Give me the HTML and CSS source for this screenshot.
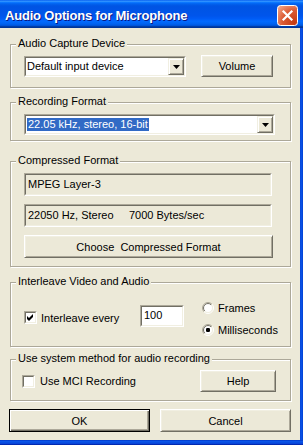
FILE: index.html
```html
<!DOCTYPE html>
<html>
<head>
<meta charset="utf-8">
<link rel="stylesheet" href="styles.css">
</head>
<body>
<div class="window">
  <div class="titlebar">
    <span class="title">Audio Options for Microphone</span>
    <span class="close">
      <svg width="21" height="21" viewBox="0 0 21 21">
        <defs>
          <radialGradient id="cg" cx="0.85" cy="0.85" r="1.1">
            <stop offset="0" stop-color="#C43A12"/>
            <stop offset="0.55" stop-color="#DB5A33"/>
            <stop offset="1" stop-color="#F2A486"/>
          </radialGradient>
        </defs>
        <rect x="0.5" y="0.5" width="20" height="20" rx="3" fill="url(#cg)" stroke="#fff"/>
        <path d="M6.5 6.5 L14.5 14.5 M14.5 6.5 L6.5 14.5" stroke="#fff" stroke-width="2.2" stroke-linecap="square"/>
      </svg>
    </span>
  </div>
  <div class="frame">
    <div class="client">

      <div class="group g1">
        <div class="legend">Audio Capture Device</div>
        <div class="row r1">
          <div class="sunk combo c1">
            <div class="sunk-in white">
              <span class="ctext">Default input device</span>
              <span class="arrow"><svg width="7" height="4" viewBox="0 0 7 4"><path d="M0 0h7l-3.5 4z" fill="#000"/></svg></span>
            </div>
          </div>
          <button class="btn vol">Volume</button>
        </div>
      </div>

      <div class="group g2">
        <div class="legend">Recording Format</div>
        <div class="sunk combo c2">
          <div class="sunk-in white">
            <span class="ctext"><span class="sel">22.05 kHz, stereo, 16-bit</span></span>
            <span class="arrow"><svg width="7" height="4" viewBox="0 0 7 4"><path d="M0 0h7l-3.5 4z" fill="#000"/></svg></span>
          </div>
        </div>
      </div>

      <div class="group g3">
        <div class="legend">Compressed Format</div>
        <div class="sunk field f1"><div class="sunk-in"><span class="ftext">MPEG Layer-3</span></div></div>
        <div class="sunk field f2"><div class="sunk-in"><span class="ftext"><span class="hz">22050 Hz, Stereo</span><span>7000 Bytes/sec</span></span></div></div>
        <button class="btn choose">Choose  Compressed Format</button>
      </div>

      <div class="group g4">
        <div class="legend">Interleave Video and Audio</div>
        <div class="row r4">
          <label class="chk-label">
            <span class="sunk chk"><span class="sunk-in white">
              <svg width="9" height="9" viewBox="0 0 9 9"><path d="M1 3 L3 5 L7 1 L7 4 L3 8 L1 6 Z" fill="#000"/></svg>
            </span></span>
            <span class="lbl">Interleave every</span>
          </label>
          <div class="sunk edit"><div class="sunk-in white"><span class="etext">100</span></div></div>
          <div class="radios">
            <div class="radio-row">
              <svg class="radio" width="12" height="12" viewBox="0 0 12 12">
                <defs>
                  <linearGradient id="ro" x1="0" y1="0" x2="1" y2="1"><stop offset="0.5" stop-color="#ACA899"/><stop offset="0.5" stop-color="#fff"/></linearGradient>
                  <linearGradient id="ri" x1="0" y1="0" x2="1" y2="1"><stop offset="0.5" stop-color="#716F64"/><stop offset="0.5" stop-color="#F1EFE2"/></linearGradient>
                </defs>
                <circle cx="6" cy="6" r="5.5" fill="none" stroke="url(#ro)"/>
                <circle cx="6" cy="6" r="4.5" fill="#fff" stroke="url(#ri)"/>
              </svg>
              <span class="rlbl">Frames</span>
            </div>
            <div class="radio-row">
              <svg class="radio" width="12" height="12" viewBox="0 0 12 12">
                <circle cx="6" cy="6" r="5.5" fill="none" stroke="url(#ro)"/>
                <circle cx="6" cy="6" r="4.5" fill="#fff" stroke="url(#ri)"/>
                <rect x="4" y="4" width="4" height="4" rx="1.2" fill="#000"/>
              </svg>
              <span class="rlbl">Milliseconds</span>
            </div>
          </div>
        </div>
      </div>

      <div class="group g5">
        <div class="legend">Use system method for audio recording</div>
        <div class="row r5">
          <label class="chk-label mci">
            <span class="sunk chk"><span class="sunk-in white"></span></span>
            <span class="lbl">Use MCI Recording</span>
          </label>
          <button class="btn help">Help</button>
        </div>
      </div>

      <div class="buttons">
        <button class="btn default ok">OK</button>
        <button class="btn cancel">Cancel</button>
      </div>

    </div>
    <div class="rborder"></div>
  </div>
  <div class="bborder"></div>
</div>
</body>
</html>
```
FILE: styles.css
```css
* { box-sizing: border-box; }
html, body { margin: 0; padding: 0; }
body {
  width: 303px;
  height: 445px;
  overflow: hidden;
  font-family: "Liberation Sans", Arial, sans-serif;
  font-size: 11px;
  color: #000;
  background: #ECE9D8;
}
.window {
  width: 303px;
  height: 445px;
  display: flex;
  flex-direction: column;
  background: #ECE9D8;
}
.titlebar {
  height: 28px;
  flex: none;
  display: flex;
  align-items: center;
  justify-content: space-between;
  padding: 2px 5px 0 5px;
  background: linear-gradient(to bottom, #0058EE 0%, #3593FF 4%, #288EFF 6%, #127DFF 8%, #036FFC 10%, #0262EE 14%, #0057E5 20%, #0054E3 24%, #0055EB 56%, #005BF5 66%, #026AFE 76%, #0062EF 86%, #0052D6 92%, #0040AB 94%, #003092 100%);
}
.title {
  color: #fff;
  font-weight: bold;
  font-size: 13px;
  text-shadow: 1px 1px 0 #0A1883;
  letter-spacing: -0.2px;
}
.close { width: 21px; height: 21px; display: block; }
.close svg { display: block; }
.frame { flex: 1; display: flex; min-height: 0; }
.client {
  flex: 1;
  display: flex;
  flex-direction: column;
  padding: 0 9px 0 10px;
}
.rborder {
  width: 4px;
  flex: none;
  background: linear-gradient(to right, #0845D9 0%, #0A55E8 50%, #0036C8 75%, #001C9C 100%);
}
.bborder {
  height: 5px;
  flex: none;
  background: linear-gradient(to bottom, #0036C8 0%, #0A55E8 30%, #0845D9 70%, #001C9C 100%);
}

/* buttons (base) */
.btn {
  font-family: "Liberation Sans", Arial, sans-serif;
  font-size: 11px;
  color: #000;
  background: #ECE9D8;
  border: 1px solid;
  border-color: #fff #716F64 #716F64 #fff;
  box-shadow: inset 1px 1px 0 #F1EFE2, inset -1px -1px 0 #ACA899;
  padding: 0;
  margin: 0;
  text-align: center;
  flex: none;
}
.btn.default {
  border: 1px solid #000;
  box-shadow: inset 1px 1px 0 #fff, inset -1px -1px 0 #716F64, inset -2px -2px 0 #ACA899;
}

/* group boxes */
.group {
  display: flex;
  flex-direction: column;
  border: 1px solid #ACA899;
  box-shadow: inset 1px 1px 0 #fff, 1px 1px 0 #fff;
}
.legend {
  align-self: flex-start;
  height: 13px;
  line-height: 13px;
  margin: -8px 0 0 5px;
  padding: 0 2px;
  background: #ECE9D8;
  white-space: nowrap;
}
.g1 { margin-top: 16px; padding-bottom: 10px; }
.g2 { margin-top: 14px; padding-bottom: 5px; }
.g3 { margin-top: 20px; padding-bottom: 8px; }
.g4 { margin-top: 15px; padding-bottom: 10px; }
.g5 { margin-top: 12px; padding-bottom: 8px; }

.row { display: flex; align-items: center; }

/* sunken controls */
.sunk {
  border: 1px solid;
  border-color: #ACA899 #fff #fff #ACA899;
}
.sunk-in {
  height: 100%;
  border: 1px solid;
  border-color: #716F64 #F1EFE2 #F1EFE2 #716F64;
  display: flex;
  align-items: center;
}
.white { background: #fff; }

.combo { height: 21px; flex: none; }
.ctext { flex: 1; white-space: nowrap; overflow: hidden; padding-left: 1px; line-height: 13px; }
.arrow {
  width: 16px;
  height: 17px;
  flex: none;
  display: flex;
  align-items: center;
  justify-content: center;
  background: #ECE9D8;
  border: 1px solid;
  border-color: #F1EFE2 #716F64 #716F64 #F1EFE2;
  box-shadow: inset 1px 1px 0 #fff, inset -1px -1px 0 #ACA899;
}
.arrow svg { display: block; margin-top: 1px; }
.sel { background: #316AC5; color: #fff; padding: 0 1px 0 1px; display: inline-block; }

.r1 { margin-top: 5px; height: 22px; padding-left: 13px; }
.c1 { width: 162px; }
.vol { margin-left: 15px; width: 72px; height: 22px; }

.c2 { margin: 6px 0 0 13px; width: 251px; }

.field { height: 23px; width: 248px; margin-left: 13px; }
.f1 { margin-top: 6px; }
.f2 { margin-top: 8px; }
.field .sunk-in { background: #ECE9D8; }
.ftext { padding-left: 2px; white-space: nowrap; display: flex; margin-top: -2px; }
.hz { width: 101px; display: inline-block; }
.choose { margin: 8px 0 0 13px; width: 249px; height: 23px; white-space: pre; }

/* checkboxes */
.chk-label { display: flex; align-items: center; }
.chk { width: 13px; height: 13px; flex: none; display: block; }
.chk .sunk-in { justify-content: center; }
.chk svg { display: block; }
.lbl { margin-left: 4px; white-space: nowrap; }

.r4 { margin-top: 13px; padding-left: 13px; align-items: flex-start; }
.r4 .chk-label { width: 116px; margin-top: 10px; flex: none; }
.edit { width: 44px; height: 22px; margin-top: 4px; flex: none; }
.etext { padding-left: 2px; margin-top: -3px; }
.radios { margin-left: 18px; display: flex; flex-direction: column; gap: 9px; }
.radio-row { display: flex; align-items: center; height: 13px; }
.radio { display: block; flex: none; }
.rlbl { margin-left: 4px; }

.r5 { margin-top: 5px; height: 22px; padding: 0 14px 0 11px; justify-content: space-between; }
.mci .lbl { margin-left: 5px; }
.help { width: 76px; height: 22px; }

.buttons { display: flex; margin: 8px 0 0 -1px; }
.ok { width: 141px; height: 23px; }
.cancel { width: 131px; height: 23px; margin-left: 10px; }
```
